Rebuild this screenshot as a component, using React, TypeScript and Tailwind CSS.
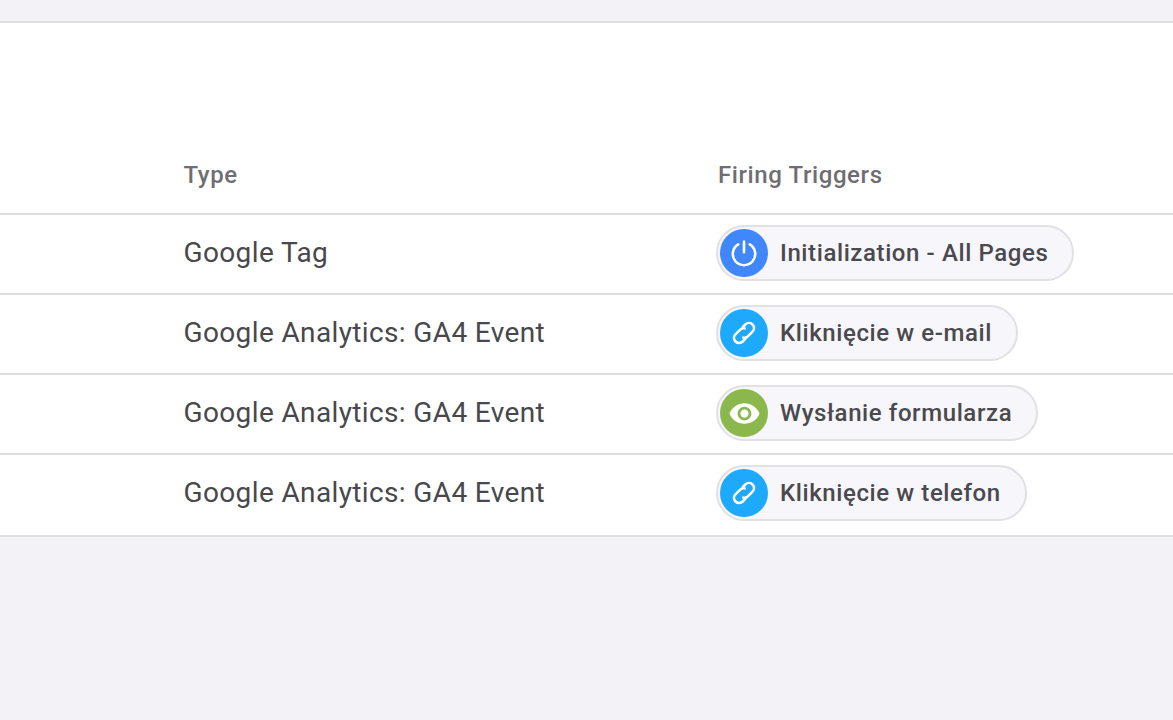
import React from "react";

const PowerIcon = () => (
  <svg width="28" height="28" viewBox="0 0 28 28" fill="none" stroke="#fff" strokeWidth="2.6" strokeLinecap="round">
    <path d="M14 2.6v10.6" />
    <path d="M8.2 5.4a11.2 11.2 0 1 0 11.6 0" />
  </svg>
);

const LinkIcon = () => (
  <svg width="32" height="32" viewBox="0 0 24 24" fill="none" stroke="#fff" strokeWidth="1.9" strokeLinecap="round" strokeLinejoin="round">
    <g transform="rotate(-45 12 12)">
      <path d="M9.6 15.8H6.8a3.8 3.8 0 0 1 0-7.6h4.9a3.8 3.8 0 0 1 3.2 1.8" />
      <path d="M14.4 8.2h2.8a3.8 3.8 0 0 1 0 7.6h-4.9a3.8 3.8 0 0 1-3.2-1.8" />
    </g>
  </svg>
);

const EyeIcon = () => (
  <svg width="33" height="33" viewBox="0 0 24 24" fill="#fff">
    <path d="M12 4.5C7 4.5 2.73 7.61 1 12c1.73 4.39 6 7.5 11 7.5s9.27-3.11 11-7.5c-1.73-4.39-6-7.5-11-7.5zM12 17c-2.76 0-5-2.24-5-5s2.24-5 5-5 5 2.24 5 5-2.24 5-5 5zm0-8c-1.66 0-3 1.34-3 3s1.34 3 3 3 3-1.34 3-3-1.34-3-3-3z" />
  </svg>
);

const rows = [
  { type: "Google Tag", label: "Initialization - All Pages", color: "bg-[#3f87fb]", icon: <PowerIcon /> },
  { type: "Google Analytics: GA4 Event", label: "Kliknięcie w e-mail", color: "bg-[#1eaafc]", icon: <LinkIcon /> },
  { type: "Google Analytics: GA4 Event", label: "Wysłanie formularza", color: "bg-[#8ab84c]", icon: <EyeIcon /> },
  { type: "Google Analytics: GA4 Event", label: "Kliknięcie w telefon", color: "bg-[#1eaafc]", icon: <LinkIcon /> },
];

export default function App() {
  return (
    <div className="h-[720px] w-[1173px] overflow-hidden bg-[#f2f2f7] font-['Roboto',sans-serif] antialiased">
      <div className="mt-[21px] border-y-2 border-[#dedee2] bg-white">
        <div className="flex h-[192px] items-end border-b-2 border-[#dddddd] pb-[22px] text-[24px] font-medium leading-[32px] tracking-[0.6px] text-[#6e6e72]">
          <div className="w-[718px] pl-[183.5px]">Type</div>
          <div>Firing Triggers</div>
        </div>
        {rows.map((r, i) => (
          <div key={i} className={`flex h-[80px] items-start pt-[10px] ${i < 3 ? "border-b-2 border-[#dddddd]" : ""}`}>
            <div className="w-[716px] pl-[183.5px] text-[28px] leading-[56px] tracking-[0.37px] text-[#48484c]">{r.type}</div>
            <div className="flex h-[56px] items-center rounded-full border-2 border-[#e1e0e4] bg-[#f7f6fa] pl-[2px] pr-[24px]">
              <div className={`flex h-[48px] w-[48px] items-center justify-center rounded-full ${r.color}`}>{r.icon}</div>
              <span className="ml-[12px] text-[24px] font-medium leading-[32px] tracking-[0.6px] text-[#4a494e]">{r.label}</span>
            </div>
          </div>
        ))}
      </div>
    </div>
  );
}
